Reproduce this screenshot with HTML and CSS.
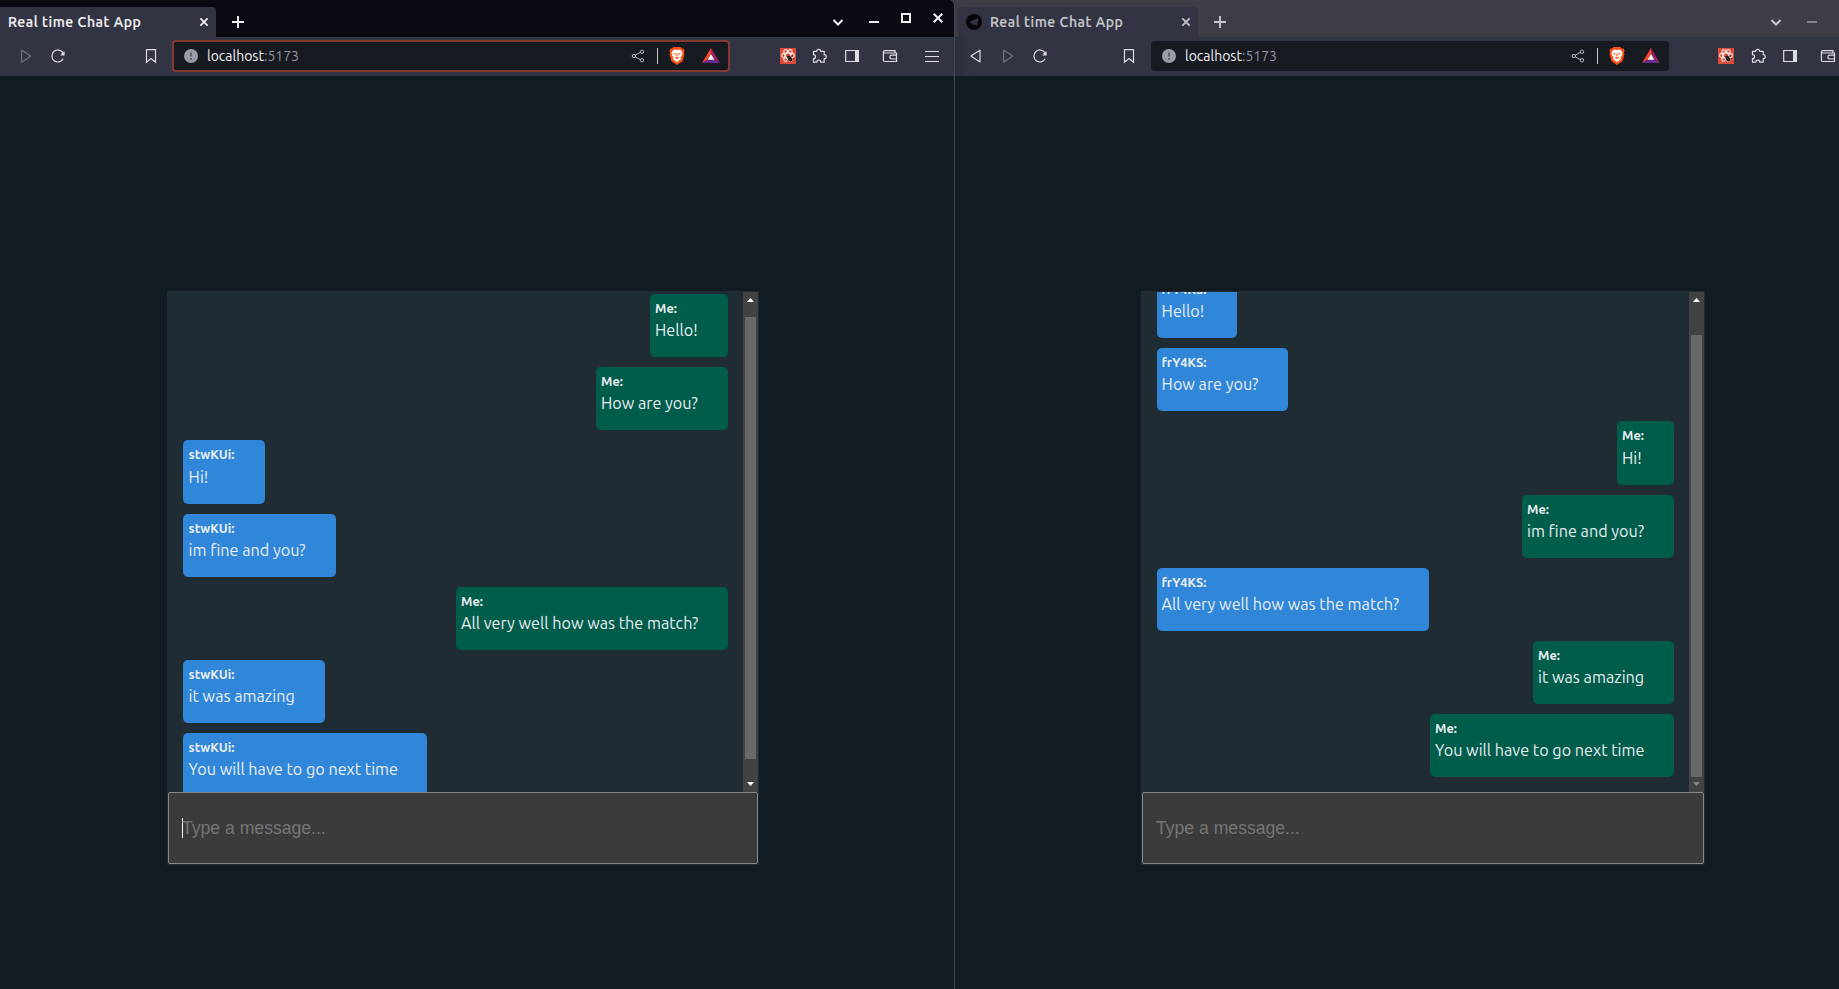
FILE: index.html
```html
<!DOCTYPE html>
<html lang="en">
<head>
<meta charset="utf-8">
<title>Real time Chat App</title>
<link rel="stylesheet" href="styles.css">
</head>
<body>
<svg class="defs" width="0" height="0" aria-hidden="true">
  <symbol id="play" viewBox="0 0 24 24"><path d="M7.6 6v12.2L16.8 12z" stroke-linejoin="round"/></symbol>
  <symbol id="back" viewBox="0 0 24 24"><path d="M16 6.200v11.800L6.800 12z" stroke-linejoin="round"/></symbol>
  <symbol id="reload" viewBox="0 0 24 24"><path d="M17.2 14.8a6 6 0 1 1-.2-6l1 2"/><path d="M14.6 11h3.4V7.6"/><circle cx="16.7" cy="9.8" r="1.3" fill="currentColor" stroke="none"/></symbol>
  <symbol id="bookmark" viewBox="0 0 24 24"><path d="M7.5 5.6h9v12.7L12 14.6l-4.5 3.7z"/></symbol>
  <symbol id="info" viewBox="0 0 24 24"><circle cx="12" cy="12" r="7" fill="#9a9da7" stroke="none"/><path d="M12 8.4v4.2M12 14v2" stroke="#5b5f69" stroke-width="1.8"/></symbol>
  <symbol id="share" viewBox="0 0 24 24"><path d="M9.2 11.2l5-2.8M9.2 12.8l5 2.8"/><circle cx="7.8" cy="12" r="1.6"/><circle cx="16" cy="7.8" r="1.7"/><circle cx="16" cy="16.2" r="1.7"/></symbol>
  <symbol id="brave" viewBox="0 0 24 24"><path d="M8.500 3h7l1.700 1.800 1.500-.2.9 2.200-.7 1.800.6 1.400-2 7.300L12 21l-5.500-3.700-2-7.300.6-1.400-.7-1.800.9-2.200 1.500.2z" fill="#fb5010" stroke="none"/><path d="M12 6l3-.600 2.500 2.900-.5 3-1.600 2.200.600 1.600L12 18.300l-4-3.200.6-1.600L7 11.300l-.5-3L9 5.400z" fill="#fff" stroke="none"/><path d="M8.400 9.500l2.200.700M15.600 9.500l-2.200.700M12 9.500v3M10.200 13.400l1.800.9 1.800-.9" stroke="#fb5010"/></symbol>
  <symbol id="bat" viewBox="0 0 24 24"><g stroke="none"><path d="M12 4L3 19l6-3.500L12 10z" fill="#ff4724"/><path d="M12 4l9 15-6-3.500L12 10z" fill="#9e1f63"/><path d="M3 19h18l-6-3.500H9z" fill="#662d91"/><path d="M12 10l3.300 5.700H8.700z" fill="#fff"/></g></symbol>
  <symbol id="react" viewBox="0 0 24 24"><path d="M4 4h16v16H4z" fill="#dc4a38" stroke="none"/><g stroke="#fbe8e5" stroke-width="1.100"><ellipse cx="12" cy="11.500" rx="6.500" ry="2.600"/><ellipse cx="12" cy="11.500" rx="6.500" ry="2.600" transform="rotate(60 12 11.500)"/><ellipse cx="12" cy="11.500" rx="6.500" ry="2.600" transform="rotate(120 12 11.500)"/></g><ellipse cx="13.800" cy="14.500" rx="2" ry="3.200" transform="rotate(-30 14 14.500)" fill="#28201f" stroke="none"/><path d="M10.800 12.500l1.800.5M16 11l-.4 1.800M11.500 16.500l1.500-.7M16.500 15l1.700-.2" stroke="#28201f" stroke-width=".8"/></symbol>
  <symbol id="puzzle" viewBox="0 0 24 24"><path d="M6.500 7.300h3.200a2 2 0 1 1 4 0h3.500v3.400a2 2 0 1 1 0 4v3.500h-3.400a2 2 0 0 0-4 0H6.500v-3.500a2 2 0 1 0 0-4z" stroke-linejoin="round"/></symbol>
  <symbol id="panel" viewBox="0 0 24 24"><path d="M5.700 6.500h12.600v11H5.700z"/><path d="M15 6h4v12h-4z" fill="currentColor" stroke="none"/></symbol>
  <symbol id="wallet" viewBox="0 0 24 24"><path d="M17 9V6.600H6.700a1.200 1.200 0 0 0 0 2.400H18.500v8.500H6.900a1.500 1.500 0 0 1-1.500-1.500V7.500M18.500 11.200h-4.700a1.900 1.900 0 0 0 0 3.800h4.700"/></symbol>
  <symbol id="menu" viewBox="0 0 24 24"><path d="M5 7.500h14M5 12.500h14M5 17.500h14"/></symbol>
  <symbol id="chevron" viewBox="0 0 24 24"><path d="M7.500 10l4.500 4.500 4.500-4.500" stroke-width="2"/></symbol>
  <symbol id="minus" viewBox="0 0 24 24"><path d="M7 12h10" stroke-width="2"/></symbol>
  <symbol id="square" viewBox="0 0 24 24"><path d="M8 8h8v8H8z" stroke-width="2"/></symbol>
  <symbol id="close" viewBox="0 0 24 24"><path d="M7.700 7.700l8.600 8.600m0-8.600l-8.600 8.600" stroke-width="2"/></symbol>
  <symbol id="tabclose" viewBox="0 0 24 24"><path d="M8.400 8.400l7.200 7.200m0-7.200l-7.200 7.200" stroke-width="1.700"/></symbol>
  <symbol id="plus" viewBox="0 0 24 24"><path d="M12 6v12M6 12h12" stroke-width="1.900"/></symbol>
  <symbol id="telegram" viewBox="0 0 24 24"><circle cx="12" cy="12" r="8" fill="#050507" stroke="none"/><path d="M6.800 12.200L16.500 8l-1.600 8.200-2.900-2-1.500 1.500-.5-2.500z" fill="#343744" stroke="none"/></symbol>
</svg>
<main class="desktop">
  <section class="window window-left">
    <header class="tabs">
      <div class="tab"><span class="title">Real time Chat App</span><svg class="icon"><use href="#tabclose"/></svg></div>
      <svg class="icon new-tab"><use href="#plus"/></svg>
      <div class="controls">
        <svg class="icon chevron"><use href="#chevron"/></svg>
        <svg class="icon minimize"><use href="#minus"/></svg>
        <svg class="icon maximize"><use href="#square"/></svg>
        <svg class="icon quit"><use href="#close"/></svg>
      </div>
    </header>
    <nav class="toolbar">
      <svg class="icon forward"><use href="#play"/></svg>
      <svg class="icon reload"><use href="#reload"/></svg>
      <svg class="icon bookmark"><use href="#bookmark"/></svg>
      <div class="address focused">
        <svg class="icon"><use href="#info"/></svg>
        <span class="url">localhost<span class="port">:5173</span></span>
        <svg class="icon share"><use href="#share"/></svg><i class="divider"></i>
        <svg class="icon brave"><use href="#brave"/></svg>
        <svg class="icon bat"><use href="#bat"/></svg>
      </div>
      <svg class="icon react"><use href="#react"/></svg>
      <svg class="icon puzzle"><use href="#puzzle"/></svg>
      <svg class="icon panel"><use href="#panel"/></svg>
      <svg class="icon wallet"><use href="#wallet"/></svg>
      <svg class="icon menu"><use href="#menu"/></svg>
    </nav>
    <div class="page">
      <div class="chat">
        <div class="log">
          <div class="messages">
            <article class="message mine" style="width:78px"><b>Me:</b><p>Hello!</p></article>
            <article class="message mine" style="width:132px"><b>Me:</b><p>How are you?</p></article>
            <article class="message" style="width:82px"><b>stwKUi:</b><p>Hi!</p></article>
            <article class="message" style="width:153px"><b>stwKUi:</b><p>im fine and you?</p></article>
            <article class="message mine" style="width:272px"><b>Me:</b><p>All very well how was the match?</p></article>
            <article class="message" style="width:142px"><b>stwKUi:</b><p>it was amazing</p></article>
            <article class="message" style="width:244px"><b>stwKUi:</b><p>You will have to go next time</p></article>
          </div>
          <div class="scrollbar"><i class="up"></i><i class="thumb"></i><i class="down"></i></div>
        </div>
        <div class="composer"><i class="caret"></i><span>Type a message...</span></div>
      </div>
    </div>
  </section>
  <section class="window window-right">
    <header class="tabs">
      <div class="tab"><svg class="icon"><use href="#telegram"/></svg><span class="title">Real time Chat App</span><svg class="icon"><use href="#tabclose"/></svg></div>
      <svg class="icon new-tab"><use href="#plus"/></svg>
      <div class="controls">
        <svg class="icon chevron"><use href="#chevron"/></svg>
        <svg class="icon minimize"><use href="#minus"/></svg>
      </div>
    </header>
    <nav class="toolbar">
      <svg class="icon back"><use href="#back"/></svg>
      <svg class="icon forward"><use href="#play"/></svg>
      <svg class="icon reload"><use href="#reload"/></svg>
      <svg class="icon bookmark"><use href="#bookmark"/></svg>
      <div class="address">
        <svg class="icon"><use href="#info"/></svg>
        <span class="url">localhost<span class="port">:5173</span></span>
        <svg class="icon share"><use href="#share"/></svg><i class="divider"></i>
        <svg class="icon brave"><use href="#brave"/></svg>
        <svg class="icon bat"><use href="#bat"/></svg>
      </div>
      <svg class="icon react"><use href="#react"/></svg>
      <svg class="icon puzzle"><use href="#puzzle"/></svg>
      <svg class="icon panel"><use href="#panel"/></svg>
      <svg class="icon wallet"><use href="#wallet"/></svg>
    </nav>
    <div class="page">
      <div class="chat">
        <div class="log">
          <div class="messages">
            <article class="message" style="width:80px"><b>frY4KS:</b><p>Hello!</p></article>
            <article class="message" style="width:131px"><b>frY4KS:</b><p>How are you?</p></article>
            <article class="message mine" style="width:57px"><b>Me:</b><p>Hi!</p></article>
            <article class="message mine" style="width:152px"><b>Me:</b><p>im fine and you?</p></article>
            <article class="message" style="width:272px"><b>frY4KS:</b><p>All very well how was the match?</p></article>
            <article class="message mine" style="width:141px"><b>Me:</b><p>it was amazing</p></article>
            <article class="message mine" style="width:244px"><b>Me:</b><p>You will have to go next time</p></article>
          </div>
          <div class="scrollbar"><i class="up"></i><i class="thumb"></i><i class="down end"></i></div>
        </div>
        <div class="composer"><span>Type a message...</span></div>
      </div>
    </div>
  </section>
</main>
</body>
</html>
```
FILE: styles.css
```css
* { box-sizing: border-box; }
body { margin: 0; background: #111b21; font-family: Ubuntu, "Noto Sans", sans-serif; overflow: hidden; }
.defs { position: absolute; }
.desktop { display: flex; width: 1839px; height: 989px; overflow: hidden; background: #3e3d45; }
.window { height: 989px; flex: none; overflow: hidden; display: flex; flex-direction: column; }
.window-left { width: 955px; border-right: 1px solid #45474d; border-top-right-radius: 6px; }
.window-right { width: 884px; }
.icon { width: 24px; height: 24px; flex: none; display: block; fill: none; stroke: currentColor; stroke-width: 1.2; }

.tabs { height: 37px; flex: none; display: flex; background: #0b0a13; color: #f2f2f4; }
.tab { height: 30px; margin-top: 7px; display: flex; align-items: center; background: #323443; border-top-right-radius: 4px; }
.title { font-size: 14px; font-weight: 500; line-height: 30px; white-space: nowrap; letter-spacing: .58px; -webkit-text-stroke: .2px currentColor; flex: 1; }
.new-tab { margin: 10px 0 0 10px; }
.controls { margin-left: auto; display: flex; }
.window-left .tab { width: 216px; padding-left: 8px; }
.window-left .chevron { margin: 10px 12px 0 0; }
.window-left .minimize { margin: 10px 8px 0 0; }
.window-left .maximize { margin: 6px 8px 0 0; }
.window-left .quit { margin: 6px 4px 0 0; }
.window-right .tabs { background: #3e3d45; color: #c9c9cd; }
.window-right .tab { width: 240px; margin-left: 3px; padding-left: 4px; border-top-left-radius: 4px; }
.window-right .title { margin-left: 4px; }
.window-right .chevron { margin: 10px 12px 0 0; }
.window-right .minimize { margin: 10px 15px 0 0; color: #85848a; }

.toolbar { height: 39px; padding-bottom: 1px; flex: none; display: flex; align-items: center; background: #323443; color: #dcdde1; }
.forward { color: #71747f; }
.address { flex: none; display: flex; align-items: center; background: #171a21; border-radius: 4px; height: 30px; }
.url { font-size: 14px; line-height: 28px; color: #f2f3f5; flex: 1; white-space: nowrap; }
.port { color: #92959c; }
.divider { width: 1px; height: 16px; background: #c9cacf; }
.address .share { margin-right: 7px; stroke-width: 1; color: #b9bbc1; }
.address .brave { margin-left: 7px; margin-right: 10px; }
.window-left .forward { margin-left: 14px; }
.window-left .reload { margin-left: 8px; }
.window-left .bookmark { margin-left: 69px; }
.window-left .address { width: 558px; height: 32px; border: 2px solid #843a31; margin-left: 9px; padding: 0 5px; }
.window-left .url { margin-left: 4px; }
.window-left .react { margin-left: 46px; }
.window-left .puzzle { margin-left: 7px; }
.window-left .panel { margin-left: 9px; }
.window-left .wallet { margin-left: 14px; }
.window-left .menu { margin-left: 18px; }
.window-right .toolbar { background: linear-gradient(90deg, #2b2d3a 0, #323443 14px); }
.window-right .back { margin-left: 9px; }
.window-right .forward { margin-left: 8px; }
.window-right .reload { margin-left: 8px; }
.window-right .bookmark { margin-left: 65px; }
.window-right .address { width: 518px; margin-left: 10px; padding: 0 6px 0 6px; }
.window-right .url { margin-left: 4px; }
.window-right .react { margin-left: 45px; }
.window-right .puzzle { margin-left: 8px; }
.window-right .panel { margin-left: 8px; }
.window-right .wallet { margin-left: 14px; }

.page { flex: 1; background: #111b21; padding-top: 215px; }
.chat { height: 574px; padding: 1px; background: #202c33; display: flex; flex-direction: column; }
.window-left .chat { width: 592px; margin-left: 167px; }
.window-right .chat { width: 564px; margin-left: 186px; }
.log { height: 500px; display: flex; overflow: hidden; }
.messages { flex: 1; display: flex; flex-direction: column; gap: 10px; padding: 0 15px; }
.window-left .messages { margin-top: 2px; }
.window-right .messages { margin-top: -17px; }
.message { height: 63.2px; flex: none; background: #3087d9; border-radius: 5px; color: #e9edef; padding: 5px 0 0 5px; white-space: nowrap; }
.window-left .message:not(.mine) { padding-left: 5.6px; }
.window-right .message:not(.mine) { padding-left: 4.6px; }
.message b { display: block; font-size: 12.8px; line-height: 18px; }
.message p { margin: 1.15px 0 0; font-size: 16.2px; line-height: 24px; }
.message.mine { align-self: flex-end; background: #005c4b; }
.scrollbar { width: 15px; background: #424242; display: flex; flex-direction: column; align-items: center; }
.up, .down { width: 7px; height: 4px; background: #fff; }
.up { margin-top: 6px; clip-path: polygon(50% 0, 100% 100%, 0 100%); }
.down { margin-top: auto; margin-bottom: 6px; clip-path: polygon(0 0, 100% 0, 50% 100%); }
.end { background: #868686; }
.thumb { width: 11px; height: 442px; background: #686868; margin-top: 15px; }
.window-right .thumb { margin-top: 33px; }
.composer { height: 72px; display: flex; align-items: center; padding-left: 13px; border: 1px solid #858585; border-radius: 2px; background: #3b3b3b; color: #757575; font: 17.6px "Liberation Sans", Arial, sans-serif; }
.caret { width: 1px; height: 20px; margin-right: -1px; background: #fff; }
```
